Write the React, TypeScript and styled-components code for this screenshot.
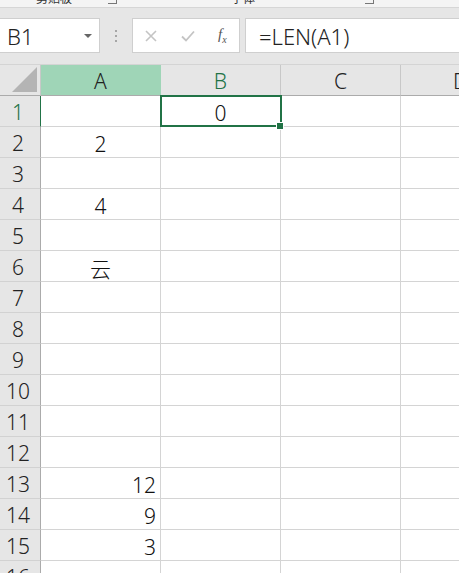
import React from 'react';
import styled, {createGlobalStyle, css} from 'styled-components';

const GlobalStyle = createGlobalStyle`
  html, body {
    margin: 0;
    padding: 0;
    background: #ffffff;
    overflow: hidden;
  }
  body {
    font-family: "Noto Sans", "Noto Sans CJK SC", sans-serif;
  }
  * {
    box-sizing: border-box;
  }
`;

const GREEN = '#217346';

const columns = ['A', 'B', 'C', 'D'];

type Align = 'center' | 'right';
type CellData = { text: string; align: Align };

const data: Record<string, CellData> = {
  'A2': {text: '2', align: 'center'},
  'A4': {text: '4', align: 'center'},
  'A6': {text: '云', align: 'center'},
  'A13': {text: '12', align: 'right'},
  'A14': {text: '9', align: 'right'},
  'A15': {text: '3', align: 'right'},
  'B1': {text: '0', align: 'center'},
};

const rows = Array.from({length: 16}, (_, i) => i + 1);

const App: React.FC = () => {
  return (
    <Page>
      <GlobalStyle/>
      <RibbonStrip>
        <RibbonGroup $width={121}>
          <GroupLabel>剪贴板</GroupLabel>
          <Launcher/>
        </RibbonGroup>
        <RibbonGroup $width={257}>
          <GroupLabel>字体</GroupLabel>
          <Launcher/>
        </RibbonGroup>
      </RibbonStrip>

      <FormulaBar>
        <NameBox>
          <NameText>B1</NameText>
          <Caret/>
        </NameBox>
        <Grip>
          <span/><span/><span/>
        </Grip>
        <FnBox>
          <svg width="14" height="14" viewBox="0 0 14 14">
            <path d="M2 2 L12 12 M12 2 L2 12" stroke="#c4c4c4" strokeWidth="1.6" fill="none"/>
          </svg>
          <svg width="16" height="14" viewBox="0 0 16 14">
            <path d="M2 7.5 L6 11.5 L14 2.5" stroke="#c4c4c4" strokeWidth="1.8" fill="none"/>
          </svg>
          <FxLabel>f<sub>x</sub></FxLabel>
        </FnBox>
        <FormulaInput>=LEN(A1)</FormulaInput>
      </FormulaBar>

      <Sheet>
        <Corner>
          <svg width="25" height="25" viewBox="0 0 25 25">
            <polygon points="25,0 25,25 0,25" fill="#b4b4b4"/>
          </svg>
        </Corner>
        {columns.map(c => (
          <ColHeader key={c} $selected={c === 'A'} $active={c === 'B'}>{c}</ColHeader>
        ))}
        {rows.map(r => (
          <React.Fragment key={r}>
            <RowHeader $active={r === 1}>{r}</RowHeader>
            {columns.map(c => {
              const cell = data[`${c}${r}`];
              return (
                <Cell key={c} $align={cell ? cell.align : 'center'} $active={c === 'B' && r === 1}>
                  {cell ? cell.text : ''}
                </Cell>
              );
            })}
          </React.Fragment>
        ))}
      </Sheet>
    </Page>
  );
};

const Page = styled.div`
  width: 459px;
  height: 573px;
  overflow: hidden;
  background: #ffffff;
`;

const RibbonStrip = styled.div`
  height: 8px;
  background: #f4f4f4;
  border-bottom: 1px solid #d6d6d6;
  display: flex;
  align-items: flex-end;
  overflow: hidden;
`;

const RibbonGroup = styled.div<{ $width: number }>`
  width: ${p => p.$width}px;
  display: flex;
  align-items: flex-end;
  padding-bottom: 2px;
  padding-right: 4px;
`;

const GroupLabel = styled.div`
  flex: 1;
  text-align: center;
  font-size: 12px;
  line-height: 12px;
  color: #333;
`;

const Launcher = styled.div`
  width: 9px;
  height: 9px;
  border-right: 1px solid #777;
  border-bottom: 1px solid #777;
  margin-bottom: 1px;
`;

const FormulaBar = styled.div`
  display: flex;
  height: 57px;
  padding: 10px 0 11px 0;
  background: #e6e6e6;
  border-bottom: 1px solid #d4d4d4;
`;

const NameBox = styled.div`
  width: 100px;
  background: #ffffff;
  border: 1px solid #cfcfcf;
  border-left: none;
  display: flex;
  align-items: center;
  justify-content: space-between;
  padding: 0 7px 0 7px;
`;

const NameText = styled.span`
  font-size: 22px;
  font-weight: 300;
  color: #222;
`;

const Caret = styled.span`
  width: 0;
  height: 0;
  border-left: 4px solid transparent;
  border-right: 4px solid transparent;
  border-top: 4px solid #666;
`;

const Grip = styled.div`
  width: 32px;
  display: flex;
  flex-direction: column;
  align-items: center;
  justify-content: center;
  gap: 3px;

  span {
    width: 2px;
    height: 2px;
    background: #a6a6a6;
  }
`;

const FnBox = styled.div`
  width: 108px;
  background: #ffffff;
  border: 1px solid #cfcfcf;
  display: flex;
  align-items: center;
  gap: 22px;
  padding-left: 11px;
`;

const FxLabel = styled.span`
  font-family: "Liberation Serif", serif;
  font-style: italic;
  font-size: 15px;
  color: #555;

  sub {
    font-size: 10px;
  }
`;

const FormulaInput = styled.div`
  flex: 1;
  margin-left: 5px;
  background: #ffffff;
  border: 1px solid #cfcfcf;
  border-right: none;
  display: flex;
  align-items: center;
  padding-left: 13px;
  font-size: 22px;
  font-weight: 300;
  color: #222;
`;

const Sheet = styled.div`
  display: grid;
  grid-template-columns: 41px 120px 120px 120px 120px;
  grid-template-rows: 31px;
  grid-auto-rows: 31px;
  font-size: 21px;
  font-weight: 300;
`;

const Corner = styled.div`
  background: #e6e6e6;
  border-right: 1px solid #c8c8c8;
  border-bottom: 1px solid #ababab;
  display: flex;
  align-items: flex-end;
  justify-content: flex-end;
  padding: 0 3px 3px 0;
`;

const ColHeader = styled.div<{ $selected?: boolean; $active?: boolean }>`
  background: ${p => (p.$selected ? '#9fd5b7' : '#e6e6e6')};
  border-right: 1px solid ${p => (p.$selected ? '#9fd5b7' : '#c8c8c8')};
  border-bottom: 1px solid ${p => (p.$active ? GREEN : '#ababab')};
  color: ${p => (p.$active ? GREEN : '#222')};
  display: flex;
  align-items: center;
  justify-content: center;
  padding-top: 2px;
`;

const RowHeader = styled.div<{ $active?: boolean }>`
  background: #e6e6e6;
  border-right: 1px solid ${p => (p.$active ? GREEN : '#ababab')};
  border-bottom: 1px solid #d2d2d2;
  color: ${p => (p.$active ? GREEN : '#222')};
  display: flex;
  align-items: center;
  justify-content: center;
  padding: 2px 4px 0 0;
`;

const Cell = styled.div<{ $align: Align; $active?: boolean }>`
  position: relative;
  border-right: 1px solid #d4d4d4;
  border-bottom: 1px solid #d4d4d4;
  display: flex;
  align-items: center;
  justify-content: ${p => (p.$align === 'right' ? 'flex-end' : 'center')};
  padding: 3px 4px 0 4px;
  color: #111;

  ${p => p.$active && css`
    &::after {
      content: '';
      position: absolute;
      left: -1px;
      top: -1px;
      right: -2px;
      bottom: -1px;
      border: 2px solid ${GREEN};
      pointer-events: none;
    }
    &::before {
      content: '';
      position: absolute;
      right: -4px;
      bottom: -4px;
      width: 6px;
      height: 6px;
      background: ${GREEN};
      border: 1px solid #ffffff;
      z-index: 2;
    }
  `}
`;

export default App;
